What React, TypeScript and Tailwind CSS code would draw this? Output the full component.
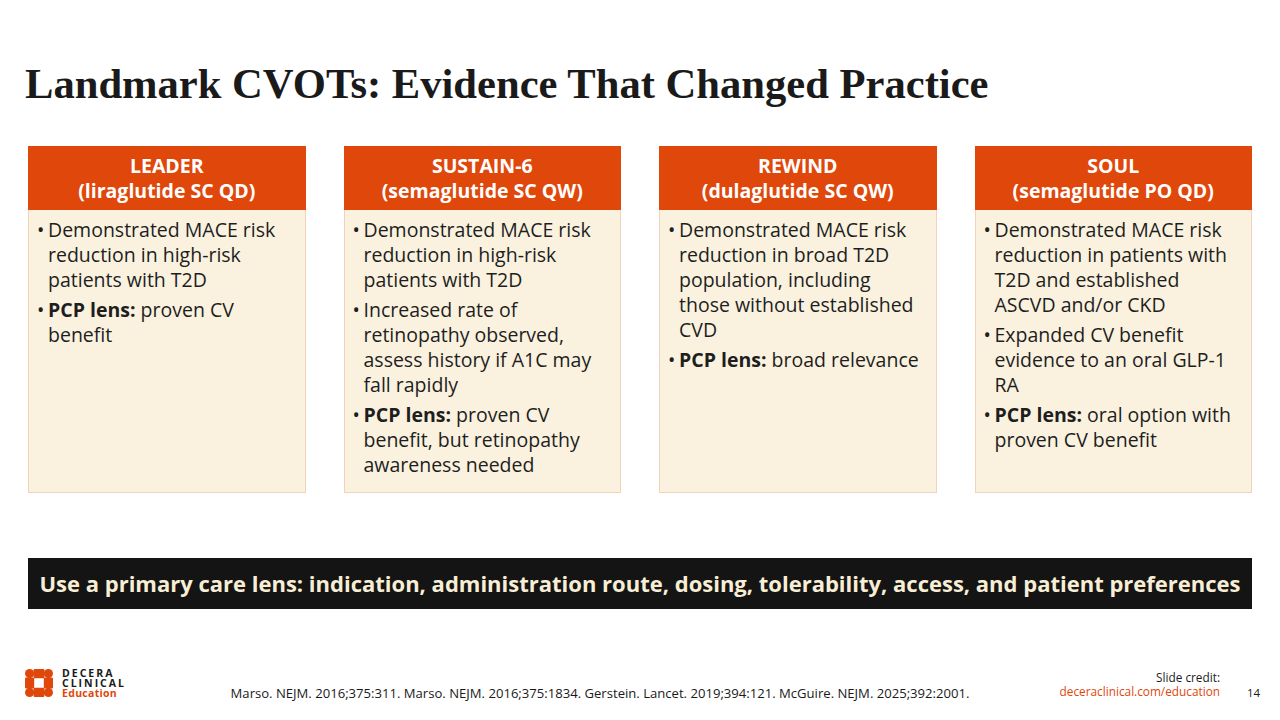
const trials = [
  {
    name: "LEADER",
    drug: "(liraglutide SC QD)",
    items: [
      { text: "Demonstrated MACE risk reduction in high-risk patients with T2D" },
      { lens: true, text: "proven CV benefit" },
    ],
  },
  {
    name: "SUSTAIN-6",
    drug: "(semaglutide SC QW)",
    items: [
      { text: "Demonstrated MACE risk reduction in high-risk patients with T2D" },
      { text: "Increased rate of retinopathy observed, assess history if A1C may fall rapidly" },
      { lens: true, text: "proven CV benefit, but retinopathy awareness needed" },
    ],
  },
  {
    name: "REWIND",
    drug: "(dulaglutide SC QW)",
    items: [
      { text: "Demonstrated MACE risk reduction in broad T2D population, including those without established CVD" },
      { lens: true, text: "broad relevance" },
    ],
  },
  {
    name: "SOUL",
    drug: "(semaglutide PO QD)",
    items: [
      { text: "Demonstrated MACE risk reduction in patients with T2D and established ASCVD and/or CKD" },
      { text: "Expanded CV benefit evidence to an oral GLP-1 RA" },
      { lens: true, text: "oral option with proven CV benefit" },
    ],
  },
];

const sans = "font-['Open_Sans',sans-serif]";

// 3x3 block mark: round corners, square edges, empty centre
function Logo() {
  return (
    <svg width="28" height="28" viewBox="0 0 28 28">
      <g fill="#e0470b">
        <circle cx="4.6" cy="4.6" r="4.6" />
        <circle cx="23.4" cy="4.6" r="4.6" />
        <circle cx="4.6" cy="23.4" r="4.6" />
        <circle cx="23.4" cy="23.4" r="4.6" />
        <rect x="8.6" y="0" width="10.8" height="9.2" rx="1" />
        <rect x="8.6" y="18.8" width="10.8" height="9.2" rx="1" />
        <rect x="0" y="8.6" width="9.2" height="10.8" rx="1" />
        <rect x="18.8" y="8.6" width="9.2" height="10.8" rx="1" />
      </g>
    </svg>
  );
}

export default function App() {
  return (
    <div className={`w-[1280px] h-[720px] bg-white relative overflow-hidden ${sans}`}>
      <h1 className="pl-[25px] pt-[58px] text-[42.6px] leading-[52px] font-bold text-[#1a1a1a] font-['Liberation_Serif',serif]">
        Landmark CVOTs: Evidence That Changed Practice
      </h1>

      {/* Trial cards */}
      <div className="mt-[36px] mx-[28px] grid grid-cols-4 gap-[38px]">
        {trials.map((t) => (
          <div key={t.name} className="h-[347px] bg-[#faf2df] border border-[#f3d2bd] flex flex-col">
            <div className="h-[64px] bg-[#e0470b] -m-px mb-0 flex flex-col items-center justify-center text-white font-bold text-[19.5px] leading-[25px]">
              <span>{t.name}</span>
              <span>{t.drug}</span>
            </div>
            <ul className="pt-[7px] pl-[8px] pr-[12px] flex flex-col gap-[5px]">
              {t.items.map((it, i) => (
                <li key={i} className="flex text-[19.5px] leading-[25px] text-[#1e1e1e]">
                  <span className="w-[11px] shrink-0">•</span>
                  <span>
                    {it.lens && <b className="font-bold">PCP lens: </b>}
                    {it.text}
                  </span>
                </li>
              ))}
            </ul>
          </div>
        ))}
      </div>

      {/* Key message bar */}
      <div className="mt-[65px] mx-[28px] h-[51px] bg-[#141414] flex items-center justify-center text-[#f8eed6] font-bold text-[22px] whitespace-nowrap">
        Use a primary care lens: indication, administration route, dosing, tolerability, access, and patient preferences
      </div>

      {/* Footer */}
      <div className="absolute left-[25px] top-[668px] flex items-center gap-[9px]">
        <Logo />
        <div className="flex flex-col text-[10.5px] leading-[10px] font-bold tracking-[2px]">
          <span className="text-[#1a1a1a]">DECERA</span>
          <span className="text-[#1a1a1a]">CLINICAL</span>
          <span className="text-[#e0470b] tracking-[0.3px]">Education</span>
        </div>
      </div>
      <div className="absolute left-0 right-[80px] top-[684px] text-center text-[13.1px] text-[#1a1a1a]">
        Marso. NEJM. 2016;375:311. Marso. NEJM. 2016;375:1834. Gerstein. Lancet. 2019;394:121. McGuire. NEJM. 2025;392:2001.
      </div>
      <div className="absolute right-[60px] top-[670px] flex flex-col items-end text-[11.8px] leading-[14px]">
        <span className="text-[#1a1a1a]">Slide credit:</span>
        <span className="text-[#e0470b]">deceraclinical.com/education</span>
      </div>
      <div className="absolute left-[1247px] top-[684px] text-[11.5px] text-[#1a1a1a]">14</div>
    </div>
  );
}
